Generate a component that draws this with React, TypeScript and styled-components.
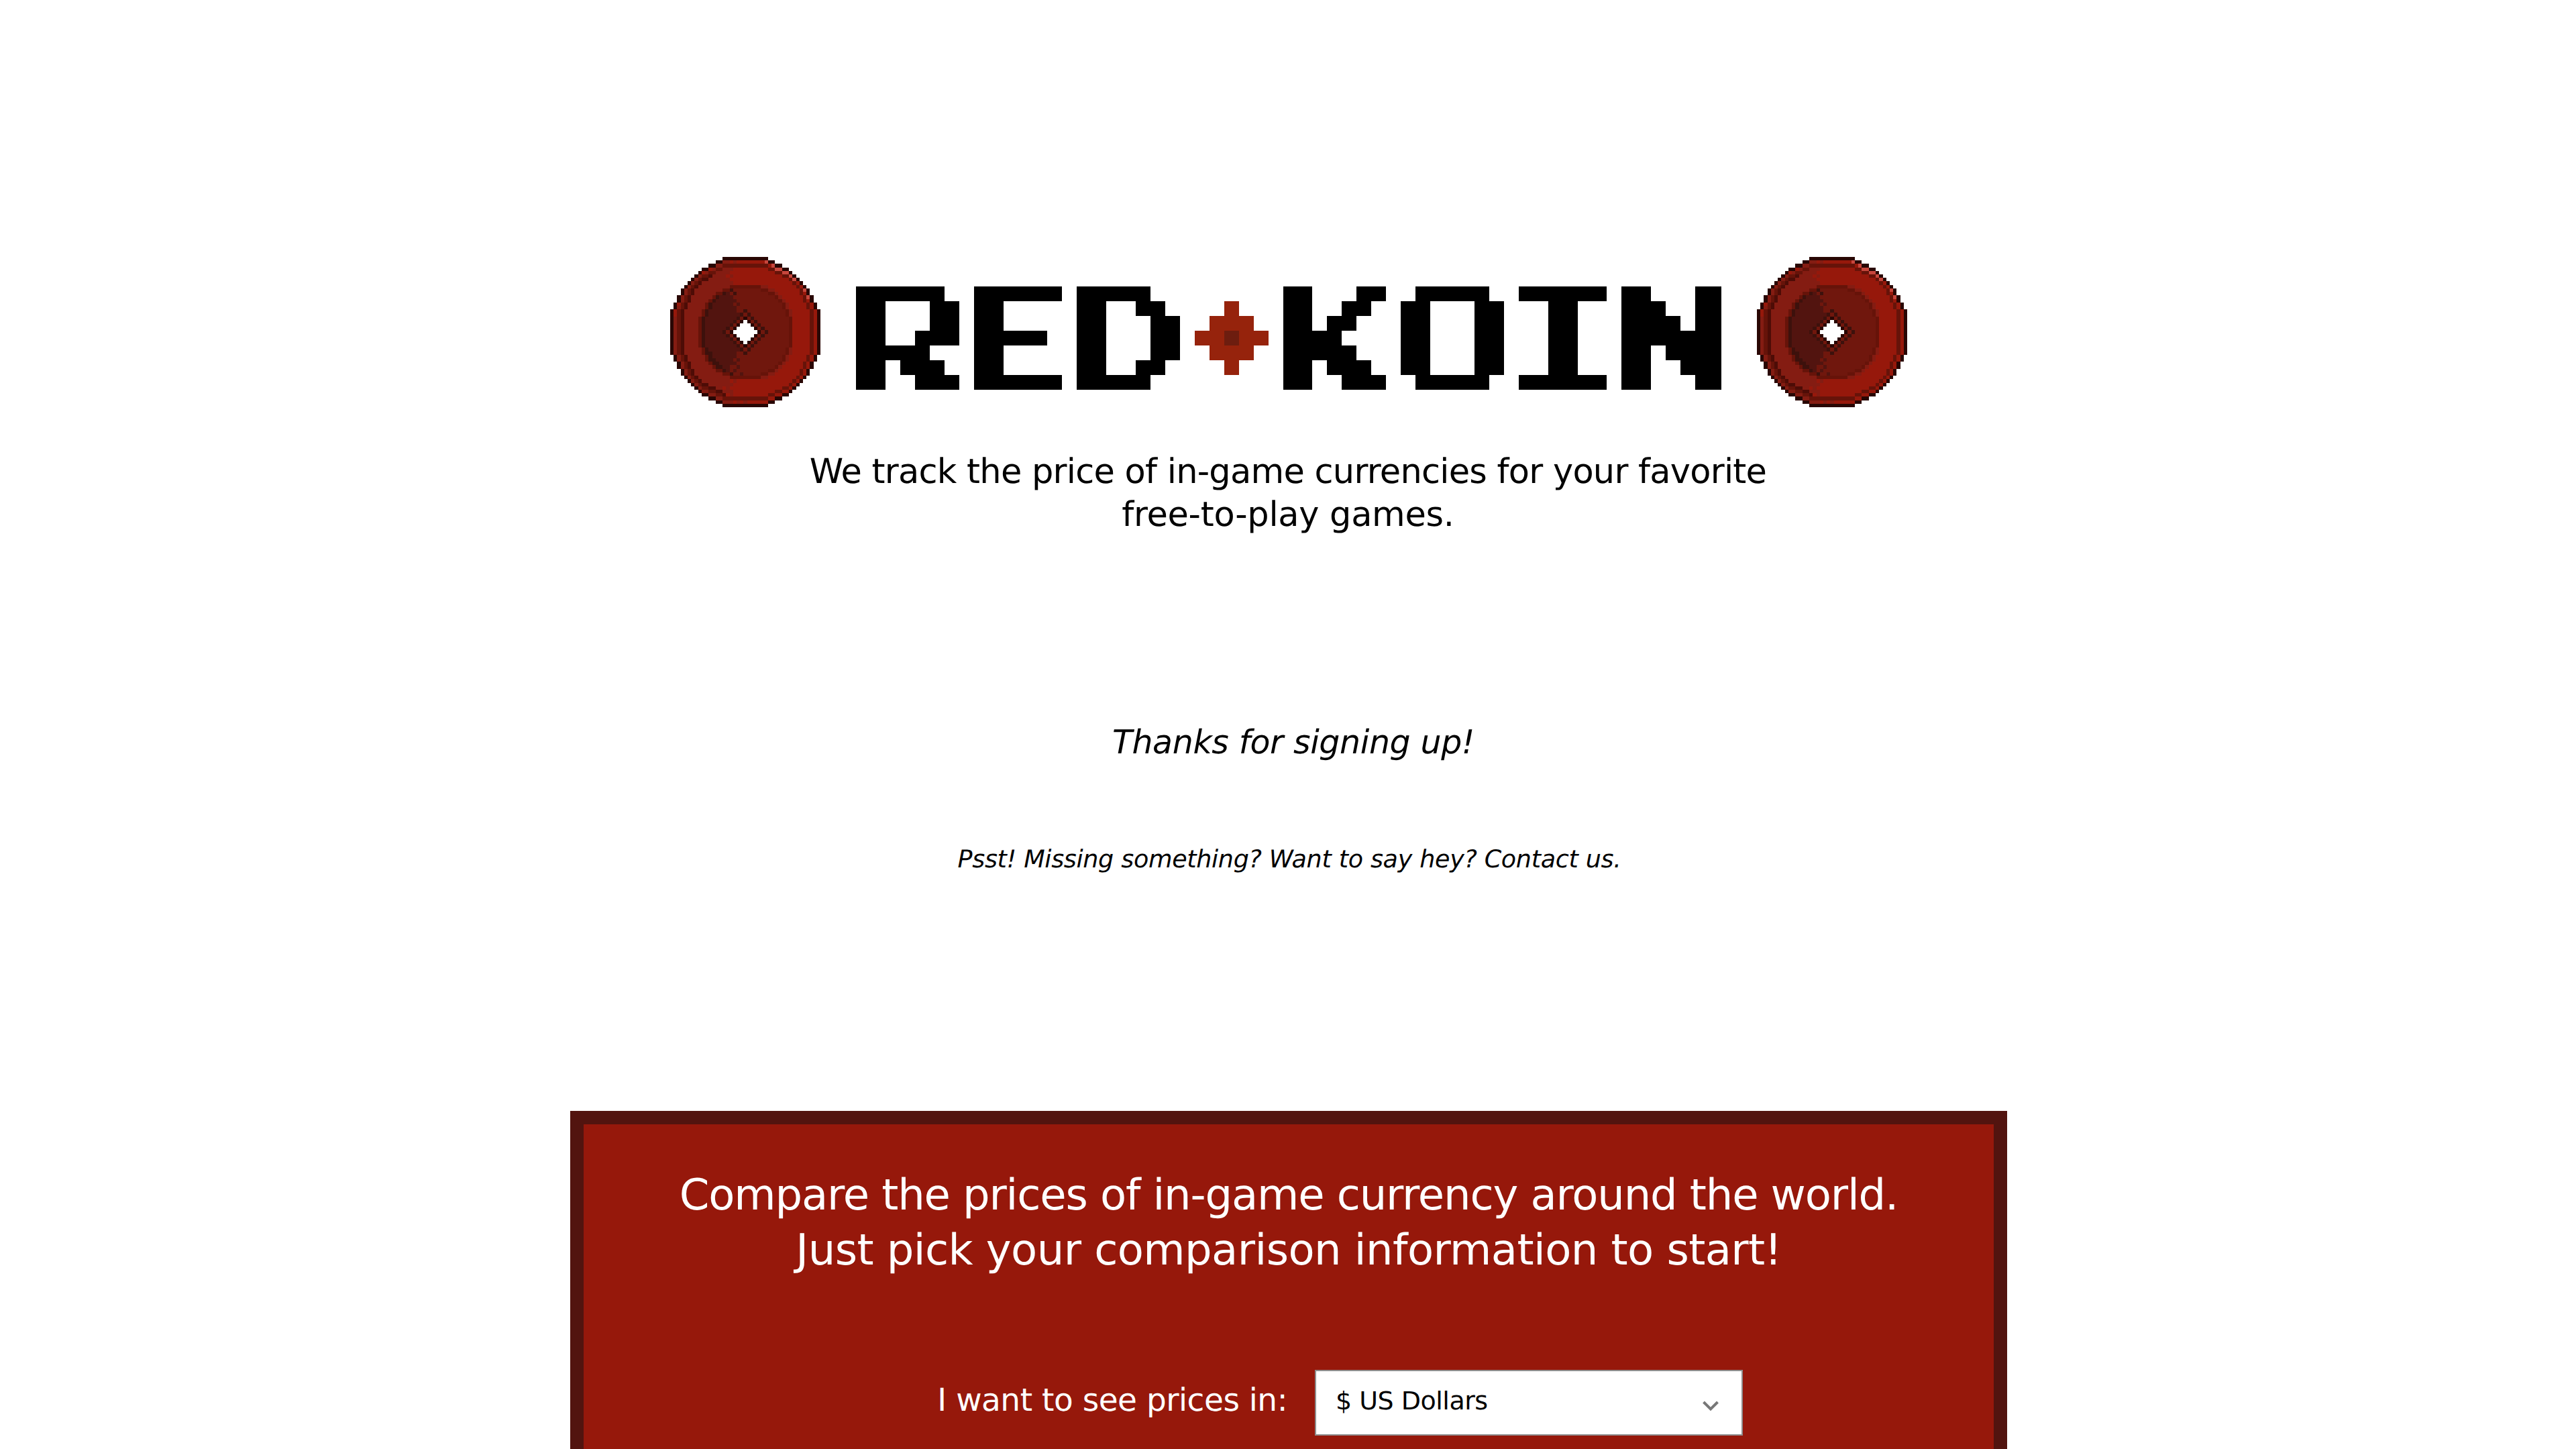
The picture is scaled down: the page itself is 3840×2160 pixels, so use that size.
import React from 'react';
import styled, { createGlobalStyle } from 'styled-components';

const GlobalStyle = createGlobalStyle`
  body {
    margin: 0;
    background: #fff;
    color: #000;
    font-family: 'DejaVu Sans', 'Noto Sans', sans-serif;
    text-rendering: geometricPrecision;
  }
`;

const Page = styled.main`
  display: flex;
  flex-direction: column;
  box-sizing: border-box;
  height: 2160px;
  padding-top: 383px;
  overflow: hidden;
`;

const Brand = styled.header`
  display: flex;
  justify-content: center;
  align-items: flex-start;
  flex-shrink: 0;
  gap: 53px;
  padding-left: 2px;
`;

const CoinArt = styled.svg`
  display: block;
  width: 224px;
  height: 224px;
`;

const Wordmark = styled.svg`
  display: block;
  width: 1290px;
  height: 154px;
  margin-top: 44px;
`;

const Tagline = styled.p`
  flex-shrink: 0;
  margin: 65px 0 0;
  font-size: 51px;
  line-height: 64px;
  text-align: center;
`;

const Line = styled.span<{ $tracking: number }>`
  display: block;
  white-space: nowrap;
  letter-spacing: ${(p) => p.$tracking}px;
`;

const Thanks = styled.p`
  flex-shrink: 0;
  margin: 279px 0 0;
  padding-left: 16px;
  font-size: 49px;
  font-style: italic;
  line-height: 56px;
  letter-spacing: -0.4px;
  text-align: center;
`;

const Contact = styled.p`
  flex-shrink: 0;
  margin: 125px 0 0;
  padding-left: 4px;
  font-size: 36.5px;
  font-style: italic;
  line-height: 42px;
  letter-spacing: -0.33px;
  text-align: center;
`;

const Panel = styled.section`
  flex-shrink: 0;
  margin: 354px 848px 0 850px;
  padding: 65px 0 120px;
  border: 20px solid #52140f;
  background: #96180b;
  color: #fff;
`;

const PanelTitle = styled.h2`
  margin: 0;
  font-size: 64px;
  font-weight: 400;
  line-height: 82px;
  text-align: center;
`;

const Field = styled.div`
  display: grid;
  grid-template-columns: 1049px 638px;
  column-gap: 41px;
  align-items: center;
  margin-top: 137px;
`;

const FieldLabel = styled.label`
  padding-bottom: 6px;
  font-size: 47px;
  line-height: 56px;
  letter-spacing: -0.5px;
  text-align: right;
  white-space: nowrap;
`;

const Picker = styled.button`
  display: flex;
  align-items: center;
  justify-content: space-between;
  box-sizing: border-box;
  height: 98px;
  padding: 0 34px 6px 29px;
  border: 2px solid #8f8f8f;
  border-radius: 0;
  background: #fff;
  color: #000;
  font-family: inherit;
  font-size: 38px;
  line-height: 46px;
  letter-spacing: -0.5px;
`;

const Chevron = styled.svg`
  display: block;
  width: 24px;
  height: 16px;
  margin-top: 16px;
`;

const coinColors: Record<string, string> = {
  k: '#290704',
  b: '#841c12',
  r: '#96180b',
  d: '#661309',
  m: '#4d0c06',
  i: '#70170d',
  j: '#52140f',
  s: '#3d110c',
  h: '#c7463c',
};

// Each row is a list of runs: a colour key followed by its length in pixels.
// "." and "w" leave the pixels empty.
const coinRows = [
  '.15 k13',
  '.13 k2 b2 r b r8 h k2',
  '.11 k2 b2 d13 r h k2',
  '.9 k2 r b d2 b3 r10 d2 h2 k2',
  '.8 k r b d2 b4 r13 d2 h2 k',
  '.7 k b d2 m b4 r b r14 d2 h k',
  '.6 k b d m2 b6 r17 d h k',
  '.5 k b d m b9 r17 d r k',
  '.4 k b d m b9 d9 b2 r8 d r k',
  '.3 k b d m b8 d2 s i8 d2 b2 r7 d h k',
  '.3 k b d m b6 d2 s j i s i9 d2 b r6 d r k',
  '.2 k b d m b6 d s j4 i12 d b r6 d h k',
  '.2 k b d m b5 d s j6 i12 d b r5 d r k',
  '.1 k r d m b5 d s j6 i j i12 d b r5 d r k',
  '.1 k b d m b5 d s j7 i13 d b r5 d r k',
  'k r d m b5 d s j8 i2 s i11 d b r5 d r k',
  'k r d m b5 d s j9 s i s i10 d b r5 d r k',
  'k b d m b4 d s j9 s i k i s i10 d r5 d r k',
  'k b d m b4 d s j8 s i k w k i s i9 d r5 d r k',
  'k b d m b4 d s j7 s i k w3 k i s i8 d r5 d r k',
  'k b d m b4 d s j6 s i k w5 k i s i7 d r5 d r k',
  'k b d m b4 d s j5 s i k w7 k i s i6 d r5 d r k',
  'k b d m b4 d s j6 s i k w5 k i s i7 d r5 d r k',
  'k b d m b4 d s j7 s i k w3 k i s i8 d r5 d r k',
  'k b d m b4 d s j8 s i k w k i s i9 d r5 d r k',
  'k b d m b4 d s j9 s i k i s i10 d r5 d r k',
  'k b d m b5 d s j9 s i s i10 d b r5 d r k',
  'k b d m b5 d s2 j7 i2 s i11 d b r5 d r k',
  '.1 k b d m b5 d s j7 i13 d b r5 d r k',
  '.1 k b d m b5 d s2 j5 i j i12 d b r5 d r k',
  '.2 k b d m b5 d s2 j5 i12 d b r5 d r k',
  '.2 k b d m b6 d s2 j2 i2 j i10 d b r6 d r k',
  '.3 k b d m b6 d2 s j i j i9 d2 b r6 d r k',
  '.3 k b d m b8 d2 s i2 j i5 d2 b2 r7 d r k',
  '.4 k b d m b9 d9 b2 r8 d r k',
  '.5 k b d m b8 r b r16 d r k',
  '.6 k b d m2 b7 r16 d r k',
  '.7 k b d2 m2 b2 r b r15 d2 r k',
  '.8 k b2 d2 m2 b3 r12 d2 r2 k',
  '.9 k2 b2 d2 m r b r10 d2 r2 k2',
  '.11 k2 b2 d13 r2 k2',
  '.13 k2 b3 r b r b r6 k2',
  '.15 k13',
];

interface Run {
  x: number;
  y: number;
  width: number;
  fill: string;
}

const coinRuns: Run[] = coinRows.flatMap((row, y) => {
  let x = 0;
  const runs: Run[] = [];
  row.split(' ').forEach((token) => {
    const width = Number(token.slice(1) || 1);
    const fill = coinColors[token[0]];
    if (fill) runs.push({ x, y, width, fill });
    x += width;
  });
  return runs;
});

function Coin() {
  return (
    <CoinArt viewBox="0 0 43 43" shapeRendering="crispEdges" aria-hidden="true">
      {coinRuns.map((run) => (
        <rect key={`${run.x}-${run.y}`} x={run.x} y={run.y} width={run.width} height={1} fill={run.fill} />
      ))}
    </CoinArt>
  );
}

const logoColors: Record<string, string> = { '#': '#000', o: '#96230c', x: '#6d1d0f' };

const logoRows = [
  '######. ###### #####..       ##...## .#####. ###### ##...##',
  '##...## ##.... ##..##.   o   ##..##. ##...## ..##.. ###..##',
  '##...## ##.... ##...##  ooo  ##.##.. ##...## ..##.. ####.##',
  '##..### #####. ##...## ooxoo ####... ##...## ..##.. #######',
  '#####.. ##.... ##...##  ooo  #####.. ##...## ..##.. ##.####',
  '##.###. ##.... ##..##.   o   ##.###. ##...## ..##.. ##..###',
  '##..### ###### #####..       ##..### .#####. ###### ##...##',
];

const logoRuns: Run[] = logoRows.flatMap((row, y) =>
  Array.from(row.matchAll(/#+|o+|x+/g), (match) => ({
    x: match.index ?? 0,
    y,
    width: match[0].length,
    fill: logoColors[match[0][0]],
  })),
);

const CELL_W = 21.95;
const CELL_H = 22;

function Logo() {
  return (
    <Wordmark viewBox="0 0 1290 154" shapeRendering="crispEdges" role="img" aria-label="Red Koin">
      {logoRuns.map((run) => (
        <rect
          key={`${run.x}-${run.y}`}
          x={run.x * CELL_W}
          y={run.y * CELL_H}
          width={run.width * CELL_W}
          height={CELL_H}
          fill={run.fill}
        />
      ))}
    </Wordmark>
  );
}

export default function App() {
  return (
    <>
      <GlobalStyle />
      <Page>
        <Brand>
          <Coin />
          <Logo />
          <Coin />
        </Brand>
        <Tagline>
          <Line $tracking={-0.75}>We track the price of in-game currencies for your favorite</Line>
          <Line $tracking={-0.3}>free-to-play games.</Line>
        </Tagline>
        <Thanks>Thanks for signing up!</Thanks>
        <Contact>Psst! Missing something? Want to say hey? Contact us.</Contact>
        <Panel>
          <PanelTitle>
            <Line $tracking={-1.15}>Compare the prices of in-game currency around the world.</Line>
            <Line $tracking={-0.58}>Just pick your comparison information to start!</Line>
          </PanelTitle>
          <Field>
            <FieldLabel htmlFor="currency">I want to see prices in:</FieldLabel>
            <Picker id="currency" type="button">
              $ US Dollars
              <Chevron viewBox="0 0 24 16" fill="none" stroke="#777" strokeWidth={4} aria-hidden="true">
                <path d="M1.5 2 L12 12.5 L22.5 2" />
              </Chevron>
            </Picker>
          </Field>
        </Panel>
      </Page>
    </>
  );
}
